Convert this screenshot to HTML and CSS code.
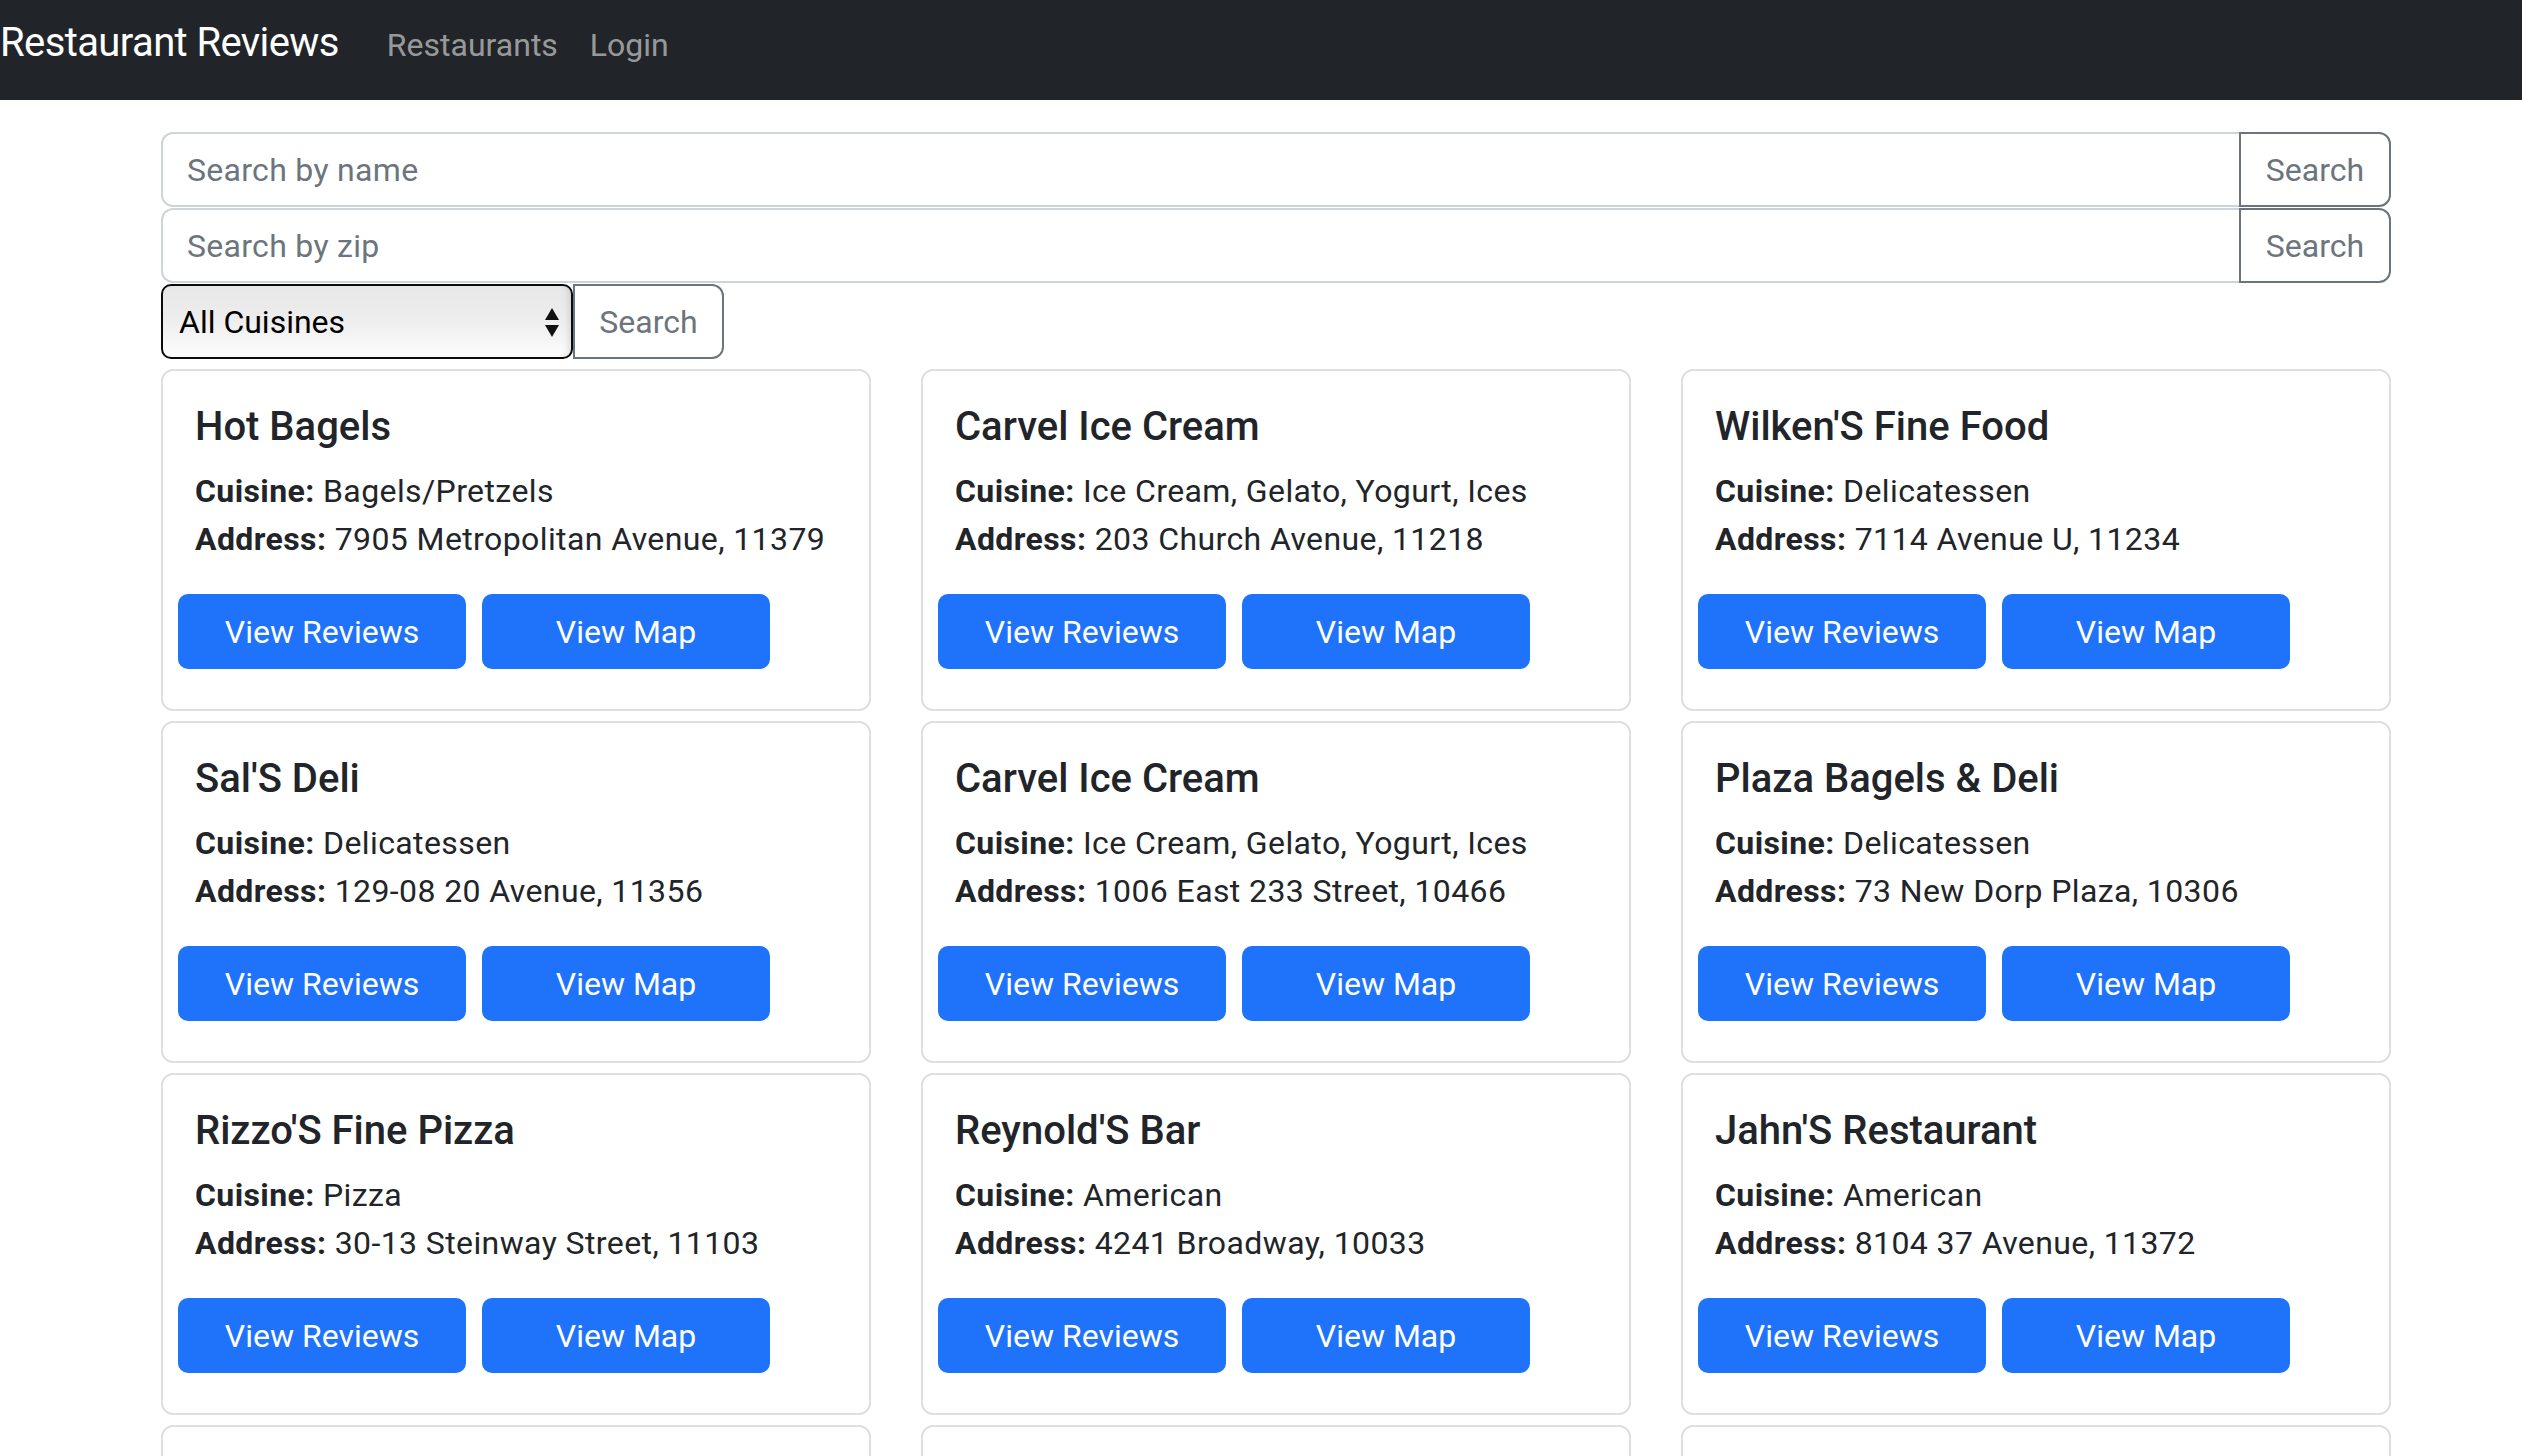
FILE: index.html
```html
<!DOCTYPE html>
<html lang="en">
<head>
<meta charset="utf-8">
<title>Restaurant Reviews</title>
<link rel="stylesheet" href="styles.css">
</head>
<body>
<nav class="navbar">
  <a class="brand" href="#">Restaurant Reviews</a>
  <a class="nav-link" href="#">Restaurants</a>
  <a class="nav-link" href="#">Login</a>
</nav>
<main class="container">
  <div class="input-group">
    <input class="form-control" type="text" placeholder="Search by name">
    <button class="btn-outline">Search</button>
  </div>
  <div class="input-group">
    <input class="form-control" type="text" placeholder="Search by zip">
    <button class="btn-outline">Search</button>
  </div>
  <div class="cuisine-row">
    <div class="select">
      <span>All Cuisines</span>
      <svg class="arrows" width="14" height="29" viewBox="0 0 14 29"><polygon points="7,0 14,12 0,12" fill="#111"/><polygon points="0,17 14,17 7,29" fill="#111"/></svg>
    </div>
    <button class="btn-outline btn-small">Search</button>
  </div>
  <div class="grid">
    <div class="card">
      <div class="card-body">
        <h5 class="card-title">Hot Bagels</h5>
        <p class="card-text"><strong>Cuisine:</strong> Bagels/Pretzels<br><strong>Address:</strong> 7905 Metropolitan Avenue, 11379</p>
      </div>
      <div class="card-actions"><a class="btn-primary" href="#">View Reviews</a><a class="btn-primary" href="#">View Map</a></div>
    </div>
    <div class="card">
      <div class="card-body">
        <h5 class="card-title">Carvel Ice Cream</h5>
        <p class="card-text"><strong>Cuisine:</strong> Ice Cream, Gelato, Yogurt, Ices<br><strong>Address:</strong> 203 Church Avenue, 11218</p>
      </div>
      <div class="card-actions"><a class="btn-primary" href="#">View Reviews</a><a class="btn-primary" href="#">View Map</a></div>
    </div>
    <div class="card">
      <div class="card-body">
        <h5 class="card-title">Wilken'S Fine Food</h5>
        <p class="card-text"><strong>Cuisine:</strong> Delicatessen<br><strong>Address:</strong> 7114 Avenue U, 11234</p>
      </div>
      <div class="card-actions"><a class="btn-primary" href="#">View Reviews</a><a class="btn-primary" href="#">View Map</a></div>
    </div>
    <div class="card">
      <div class="card-body">
        <h5 class="card-title">Sal'S Deli</h5>
        <p class="card-text"><strong>Cuisine:</strong> Delicatessen<br><strong>Address:</strong> 129-08 20 Avenue, 11356</p>
      </div>
      <div class="card-actions"><a class="btn-primary" href="#">View Reviews</a><a class="btn-primary" href="#">View Map</a></div>
    </div>
    <div class="card">
      <div class="card-body">
        <h5 class="card-title">Carvel Ice Cream</h5>
        <p class="card-text"><strong>Cuisine:</strong> Ice Cream, Gelato, Yogurt, Ices<br><strong>Address:</strong> 1006 East 233 Street, 10466</p>
      </div>
      <div class="card-actions"><a class="btn-primary" href="#">View Reviews</a><a class="btn-primary" href="#">View Map</a></div>
    </div>
    <div class="card">
      <div class="card-body">
        <h5 class="card-title">Plaza Bagels &amp; Deli</h5>
        <p class="card-text"><strong>Cuisine:</strong> Delicatessen<br><strong>Address:</strong> 73 New Dorp Plaza, 10306</p>
      </div>
      <div class="card-actions"><a class="btn-primary" href="#">View Reviews</a><a class="btn-primary" href="#">View Map</a></div>
    </div>
    <div class="card">
      <div class="card-body">
        <h5 class="card-title">Rizzo'S Fine Pizza</h5>
        <p class="card-text"><strong>Cuisine:</strong> Pizza<br><strong>Address:</strong> 30-13 Steinway Street, 11103</p>
      </div>
      <div class="card-actions"><a class="btn-primary" href="#">View Reviews</a><a class="btn-primary" href="#">View Map</a></div>
    </div>
    <div class="card">
      <div class="card-body">
        <h5 class="card-title">Reynold'S Bar</h5>
        <p class="card-text"><strong>Cuisine:</strong> American<br><strong>Address:</strong> 4241 Broadway, 10033</p>
      </div>
      <div class="card-actions"><a class="btn-primary" href="#">View Reviews</a><a class="btn-primary" href="#">View Map</a></div>
    </div>
    <div class="card">
      <div class="card-body">
        <h5 class="card-title">Jahn'S Restaurant</h5>
        <p class="card-text"><strong>Cuisine:</strong> American<br><strong>Address:</strong> 8104 37 Avenue, 11372</p>
      </div>
      <div class="card-actions"><a class="btn-primary" href="#">View Reviews</a><a class="btn-primary" href="#">View Map</a></div>
    </div>
    <div class="card">
      <div class="card-body">
        <h5 class="card-title">Riviera Caterer</h5>
        <p class="card-text"><strong>Cuisine:</strong> American<br><strong>Address:</strong> 2780 Stillwell Avenue, 11224</p>
      </div>
      <div class="card-actions"><a class="btn-primary" href="#">View Reviews</a><a class="btn-primary" href="#">View Map</a></div>
    </div>
    <div class="card">
      <div class="card-body">
        <h5 class="card-title">Wendy'S</h5>
        <p class="card-text"><strong>Cuisine:</strong> Hamburgers<br><strong>Address:</strong> 469 Flatbush Avenue, 11225</p>
      </div>
      <div class="card-actions"><a class="btn-primary" href="#">View Reviews</a><a class="btn-primary" href="#">View Map</a></div>
    </div>
    <div class="card">
      <div class="card-body">
        <h5 class="card-title">Tov Kosher Kitchen</h5>
        <p class="card-text"><strong>Cuisine:</strong> Jewish/Kosher<br><strong>Address:</strong> 97-22 63 Road, 11374</p>
      </div>
      <div class="card-actions"><a class="btn-primary" href="#">View Reviews</a><a class="btn-primary" href="#">View Map</a></div>
    </div>
  </div>
</main>
</body>
</html>
```

FILE: styles.css
```css
* { box-sizing: border-box; }

html, body {
  margin: 0;
  padding: 0;
  background: #ffffff;
  color: #212529;
  font-family: "Roboto", "Liberation Sans", sans-serif;
  font-size: 32px;
  line-height: 48px;
}

a { text-decoration: none; }

.navbar {
  display: flex;
  align-items: baseline;
  height: 100px;
  padding-top: 19px;
  background: #212529;
}

.brand {
  margin-right: 32px;
  color: #ffffff;
  font-size: 40px;
  line-height: 48px;
  letter-spacing: -0.6px;
  white-space: nowrap;
}

.nav-link {
  padding: 0 16px;
  color: rgba(255, 255, 255, 0.55);
  font-size: 32px;
  line-height: 48px;
}

.container {
  width: 2230px;
  margin: 32px 0 0 161px;
}

.input-group {
  display: flex;
  height: 75px;
  margin-bottom: 1px;
}

.form-control {
  flex: 1;
  min-width: 0;
  height: 75px;
  padding: 0 24px;
  border: 2px solid #ced4da;
  border-right: none;
  border-radius: 12px 0 0 12px;
  font-family: inherit;
  font-size: 32px;
  letter-spacing: 0.3px;
  color: #212529;
  background: #fff;
  outline: none;
}

.form-control::placeholder { color: #6c757d; opacity: 1; }

.btn-outline {
  width: 152px;
  height: 75px;
  padding: 0;
  border: 2px solid #6c757d;
  border-radius: 0 12px 12px 0;
  background: #fff;
  color: #6c757d;
  font-family: inherit;
  font-size: 32px;
  line-height: 48px;
  text-align: center;
}

.cuisine-row {
  display: flex;
  height: 75px;
}

.select {
  display: flex;
  align-items: center;
  justify-content: space-between;
  width: 412px;
  height: 75px;
  padding: 0 12px 0 16px;
  border: 2px solid #0b0b0b;
  border-radius: 10px;
  background: linear-gradient(#e7e7e7 0%, #ededed 45%, #fcfcfc 100%);
  box-shadow: inset -6px 0 6px -4px rgba(0, 0, 0, 0.12);
  color: #000;
  font-size: 32px;
}

.arrows { display: block; margin-top: 2px; }

.btn-small { width: 151px; }

.grid {
  display: grid;
  grid-template-columns: repeat(3, 710px);
  column-gap: 50px;
  row-gap: 10px;
  margin-top: 10px;
}

.card {
  height: 342px;
  border: 2px solid #dfdfdf;
  border-radius: 12px;
  background: #fff;
  overflow: hidden;
}

.card-body {
  padding: 32px 32px 0 32px;
}

.card-title {
  margin: 0 0 16px 0;
  font-size: 40px;
  line-height: 48px;
  font-weight: 500;
}

.card-text {
  margin: 0 0 31px 0;
  font-size: 32px;
  line-height: 48px;
  letter-spacing: 0.4px;
  white-space: nowrap;
}

.card-text strong { font-weight: 700; }

.card-actions {
  display: flex;
  gap: 16px;
  padding-left: 15px;
}

.btn-primary {
  display: flex;
  align-items: center;
  justify-content: center;
  width: 288px;
  height: 75px;
  border-radius: 10px;
  background: #1e73fa;
  color: #ffffff;
  font-size: 32px;
}
```
